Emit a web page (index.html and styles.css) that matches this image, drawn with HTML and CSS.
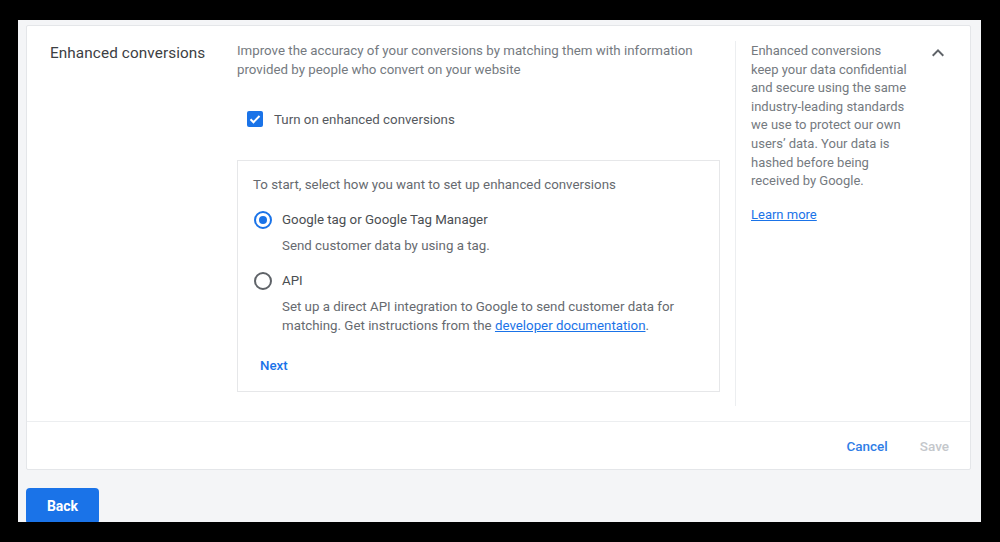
FILE: index.html
```html
<!DOCTYPE html>
<html lang="en">
<head>
<meta charset="utf-8">
<title>Enhanced conversions</title>
<link rel="stylesheet" href="styles.css">
</head>
<body>
<div class="screen">
  <section class="card">
    <div class="card-body">
      <div class="title-col">
        <h2 class="title">Enhanced conversions</h2>
      </div>
      <div class="main-col">
        <p class="desc">Improve the accuracy of your conversions by matching them with information<br>provided by people who convert on your website</p>
        <label class="check-row">
          <span class="checkbox">
            <svg viewBox="0 0 16 16" width="16" height="16"><path d="M3.5 8.2l3 3 6-6.2" fill="none" stroke="#fff" stroke-width="2"/></svg>
          </span>
          <span class="check-label">Turn on enhanced conversions</span>
        </label>
        <div class="setup-box">
          <p class="setup-intro">To start, select how you want to set up enhanced conversions</p>
          <div class="option">
            <span class="radio checked"></span>
            <div class="opt-text">
              <div class="opt-title">Google tag or Google Tag Manager</div>
              <div class="opt-desc">Send customer data by using a tag.</div>
            </div>
          </div>
          <div class="option">
            <span class="radio"></span>
            <div class="opt-text">
              <div class="opt-title">API</div>
              <div class="opt-desc">Set up a direct API integration to Google to send customer data for<br>matching. Get instructions from the <a href="#" class="link">developer documentation</a>.</div>
            </div>
          </div>
          <button class="next">Next</button>
        </div>
      </div>
      <aside class="side-col">
        <p class="side-text">Enhanced conversions<br>keep your data confidential<br>and secure using the same<br>industry-leading standards<br>we use to protect our own<br>users’ data. Your data is<br>hashed before being<br>received by Google.</p>
        <a href="#" class="link learn">Learn more</a>
      </aside>
      <div class="chev-col">
        <svg viewBox="0 0 24 24" width="24" height="24"><path d="M12 8l-6 6 1.41 1.41L12 10.83l4.59 4.58L18 14z" fill="#5f6368"/></svg>
      </div>
    </div>
    <div class="card-footer">
      <button class="text-btn cancel">Cancel</button>
      <button class="text-btn save">Save</button>
    </div>
  </section>
  <div class="actions">
    <button class="back">Back</button>
  </div>
</div>
</body>
</html>
```
FILE: styles.css
```css
html, body {
  margin: 0;
  padding: 0;
  background: #000;
}
body {
  width: 1000px;
  height: 542px;
  overflow: hidden;
  font-family: Roboto, "Liberation Sans", Arial, sans-serif;
}
.screen {
  margin: 20px 0 0 18px;
  width: 963px;
  height: 502px;
  background: #f4f5f7;
  overflow: hidden;
  box-sizing: border-box;
  padding: 5px 10px 0 8px;
}
.card {
  background: #fff;
  border: 1px solid #e4e6e9;
  border-radius: 2px;
  height: 445px;
  box-sizing: border-box;
  display: flex;
  flex-direction: column;
}
.card-body {
  display: flex;
  padding: 15px 0 15px 23px;
  flex: 1;
}
.title-col {
  width: 187px;
}
.title {
  margin: 0;
  font-size: 15.3px;
  font-weight: 400;
  line-height: 24px;
  color: #3c4043;
  letter-spacing: 0.1px;
}
.main-col {
  width: 498px;
  padding-bottom: 14px;
}
.desc {
  margin: 0;
  font-size: 13.3px;
  line-height: 19px;
  color: #757a7f;
}
.check-row {
  display: flex;
  align-items: center;
  height: 24px;
  margin-top: 28px;
  padding-left: 10px;
}
.checkbox {
  width: 16px;
  height: 16px;
  border-radius: 2px;
  background: #1a73e8;
  display: flex;
  align-items: center;
  justify-content: center;
  margin-right: 11px;
}
.checkbox svg { display: block; }
.check-label {
  font-size: 13.3px;
  color: #55595e;
}
.setup-box {
  margin-top: 29px;
  width: 483px;
  box-sizing: border-box;
  border: 1px solid #e6e7e9;
  padding: 14px 15px 16px 15px;
}
.setup-intro {
  margin: 0;
  font-size: 13.3px;
  line-height: 19px;
  color: #666a6f;
}
.option {
  display: flex;
  align-items: flex-start;
  margin-top: 16px;
}
.radio {
  width: 18px;
  height: 18px;
  box-sizing: border-box;
  border: 2px solid #5f6368;
  border-radius: 50%;
  margin: 1px 10px 0 1px;
  flex: none;
  display: flex;
  align-items: center;
  justify-content: center;
}
.radio.checked {
  border-color: #1a73e8;
}
.radio.checked::after {
  content: "";
  width: 8px;
  height: 8px;
  border-radius: 50%;
  background: #1a73e8;
}
.opt-title {
  font-size: 13.3px;
  line-height: 19px;
  color: #4a4e52;
}
.opt-desc {
  margin-top: 7px;
  font-size: 13.3px;
  line-height: 19px;
  color: #666a6f;
}
.link {
  color: #1a73e8;
  text-decoration: underline;
}
.next {
  margin-top: 21px;
  margin-left: 7px;
  padding: 0;
  border: 0;
  background: none;
  font-family: inherit;
  font-size: 13.3px;
  font-weight: 500;
  line-height: 19px;
  color: #1a73e8;
  cursor: pointer;
}
.side-col {
  width: 176px;
  border-left: 1px solid #eceef0;
  padding-left: 15px;
  padding-top: 1px;
  box-sizing: border-box;
}
.side-text {
  margin: 0;
  font-size: 13px;
  line-height: 18.6px;
  color: #757a7f;
}
.learn {
  display: inline-block;
  margin-top: 14px;
  font-size: 13px;
  line-height: 19px;
}
.chev-col {
  padding-left: 15px;
}
.chev-col svg { display: block; }
.card-footer {
  height: 49px;
  border-top: 1px solid #eceef0;
  display: flex;
  align-items: center;
  justify-content: flex-end;
  gap: 16px;
  padding-right: 13px;
}
.text-btn {
  border: 0;
  background: none;
  padding: 0 8px;
  font-family: inherit;
  font-size: 13.5px;
  font-weight: 500;
  line-height: 20px;
}
.cancel { color: #2f7de6; }
.save { color: #c4c7cb; }
.actions {
  padding-top: 18px;
}
.back {
  width: 73px;
  height: 36px;
  border: 0;
  border-radius: 4px;
  background: #1a73e8;
  color: #fff;
  font-family: inherit;
  font-size: 14px;
  font-weight: 700;
}
```
